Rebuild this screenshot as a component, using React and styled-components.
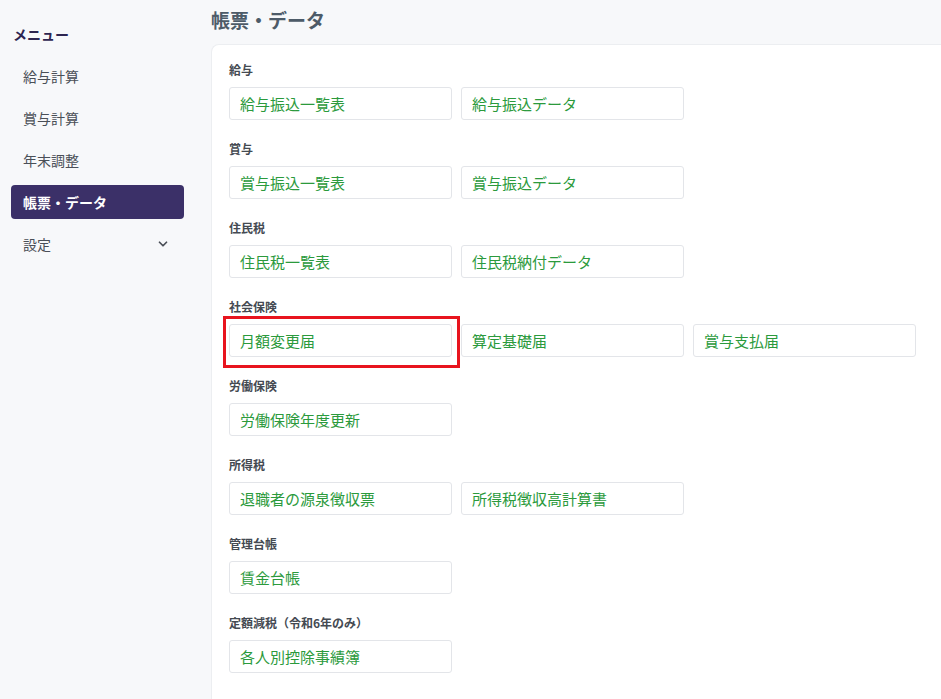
import React from 'react';
import styled, { createGlobalStyle } from 'styled-components';

const Global = createGlobalStyle`
  body { margin: 0; background: #f7f8fa; font-family: "Noto Sans CJK JP", "Noto Sans", sans-serif; }
`;

const Page = styled.div`
  display: flex;
  height: 699px;
  overflow: hidden;
`;

const Side = styled.nav`
  width: 195px;
  flex: none;
  padding: 22px 11px 0;
  box-sizing: border-box;
`;

const MenuTitle = styled.div`
  font-size: 14px;
  font-weight: 700;
  color: #2d2550;
  padding-left: 2px;
  height: 24px;
  line-height: 24px;
  margin-bottom: 13px;
`;

const Item = styled.div`
  display: flex;
  align-items: center;
  justify-content: space-between;
  height: 34px;
  margin-bottom: 8px;
  padding: 0 14px 0 12px;
  border-radius: 4px;
  font-size: 14px;
  font-weight: ${p => (p.active ? 700 : 400)};
  color: ${p => (p.active ? '#fff' : '#4a4f57')};
  background: ${p => (p.active ? '#3b3068' : 'transparent')};
`;

const Main = styled.main`
  flex: 1;
  padding-left: 16px;
`;

const Title = styled.h1`
  margin: 0;
  height: 44px;
  line-height: 40px;
  font-size: 19px;
  font-weight: 700;
  color: #4d5b68;
`;

const Card = styled.div`
  background: #fff;
  border-radius: 8px 0 0 0;
  border: 1px solid #eceef1;
  border-right: none;
  padding: 16px 17px 40px;
  min-height: 700px;
`;

const Section = styled.section`
  margin-bottom: 20px;
`;

const Label = styled.div`
  font-size: 12px;
  font-weight: 700;
  color: #444a52;
  height: 18px;
  line-height: 18px;
  margin-bottom: 8px;
`;

const Row = styled.div`
  display: flex;
  gap: 9px;
`;

const Wrap = styled.div`
  position: relative;
`;

const Btn = styled.div`
  width: 223px;
  height: 33px;
  box-sizing: border-box;
  border: 1px solid #e3e5e9;
  border-radius: 3px;
  padding-left: 10px;
  display: flex;
  align-items: center;
  font-size: 15px;
  color: #2b9a3c;
  background: #fff;
`;

const Highlight = styled.div`
  position: absolute;
  left: -6px;
  top: -8px;
  right: -8px;
  bottom: -11px;
  border: 3px solid #e8141e;
  pointer-events: none;
`;

const sections = [
  ['給与', ['給与振込一覧表', '給与振込データ']],
  ['賞与', ['賞与振込一覧表', '賞与振込データ']],
  ['住民税', ['住民税一覧表', '住民税納付データ']],
  ['社会保険', ['月額変更届', '算定基礎届', '賞与支払届']],
  ['労働保険', ['労働保険年度更新']],
  ['所得税', ['退職者の源泉徴収票', '所得税徴収高計算書']],
  ['管理台帳', ['賃金台帳']],
  ['定額減税（令和6年のみ）', ['各人別控除事績簿']],
];

const Chevron = () => (
  <svg width="14" height="14" viewBox="0 0 24 24" fill="none" stroke="#4a4f57" strokeWidth="3" strokeLinecap="round" strokeLinejoin="round">
    <path d="M6 9l6 6 6-6" />
  </svg>
);

export default function App() {
  return (
    <Page>
      <Global />
      <Side>
        <MenuTitle>メニュー</MenuTitle>
        <Item>給与計算</Item>
        <Item>賞与計算</Item>
        <Item>年末調整</Item>
        <Item active>帳票・データ</Item>
        <Item>設定<Chevron /></Item>
      </Side>
      <Main>
        <Title>帳票・データ</Title>
        <Card>
          {sections.map(([label, items]) => (
            <Section key={label}>
              <Label>{label}</Label>
              <Row>
                {items.map(t => (
                  <Wrap key={t}>
                    <Btn>{t}</Btn>
                    {t === '月額変更届' && <Highlight />}
                  </Wrap>
                ))}
              </Row>
            </Section>
          ))}
        </Card>
      </Main>
    </Page>
  );
}
